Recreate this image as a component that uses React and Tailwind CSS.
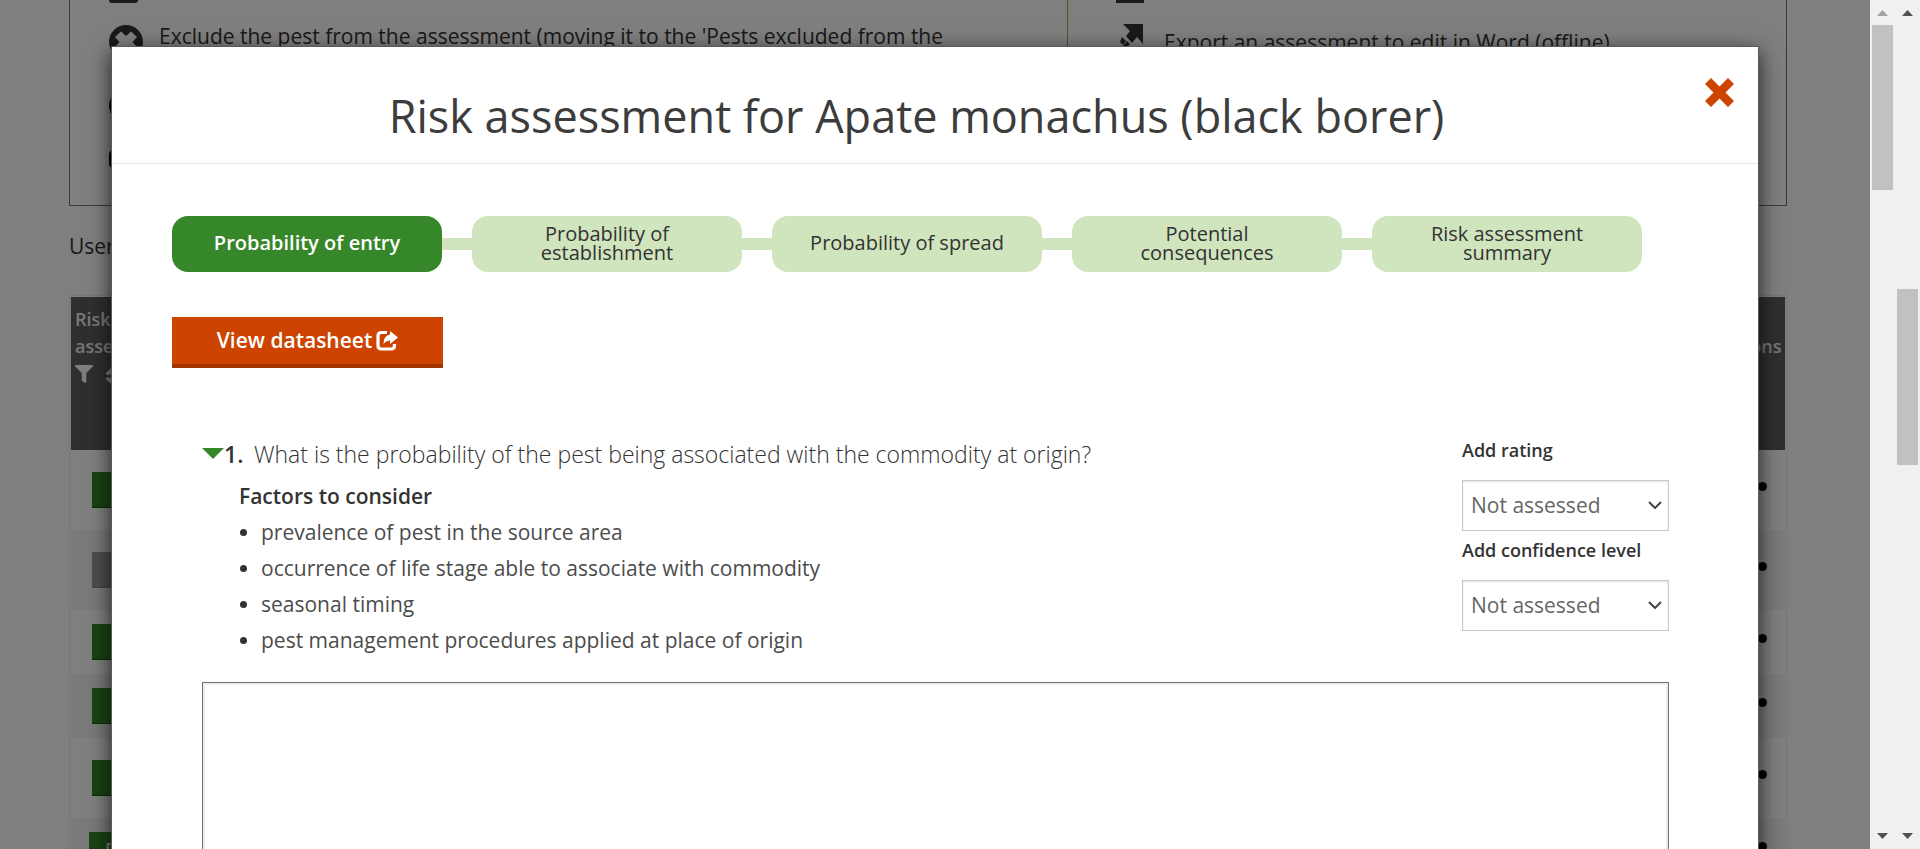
import { FaFilter, FaSort } from "react-icons/fa";

const steps = [
  "Probability of entry",
  "Probability of establishment",
  "Probability of spread",
  "Potential consequences",
  "Risk assessment summary",
];

const factors = [
  "prevalence of pest in the source area",
  "occurrence of life stage able to associate with commodity",
  "seasonal timing",
  "pest management procedures applied at place of origin",
];

const rows = [
  { h: "h-20", btn: "ml-[21px] bg-[#368729] border-[#1b5a10]" },
  { h: "h-20", btn: "ml-[21px] bg-[#9a9a9a] border-[#888888]" },
  { h: "h-16", btn: "ml-[21px] bg-[#368729] border-[#1b5a10]" },
  { h: "h-16", btn: "ml-[21px] bg-[#368729] border-[#1b5a10]" },
  { h: "h-20", btn: "ml-[21px] bg-[#368729] border-[#1b5a10]" },
  { h: "h-16", btn: "ml-[18px] bg-[#368729] border-[#1b5a10]", label: "Final" },
];

function ExcludeIcon() {
  return (
    <svg viewBox="0 0 34 34" className="size-[34px] shrink-0" aria-hidden="true">
      <circle cx="17" cy="17" r="17" fill="#333" />
      <path d="M12 6.500l5 4.500 5-4.500 6 5.500-4.500 5 4.500 5-6 6-5-5-5 5-6-6 4.500-5L6 12z" fill="#fff" />
    </svg>
  );
}

function ExportIcon() {
  return (
    <svg viewBox="0 0 28 28" className="h-7 w-7 shrink-0" fill="#333" aria-hidden="true">
      <path d="M7 1h20v20l-6-7-5 6-6-7 4-5zM6 14l4 4-3 4-3-3zM11 18l3 3-4 4-3-2z" />
    </svg>
  );
}

function SearchIcon() {
  return (
    <svg viewBox="0 0 34 34" className="size-[34px]" fill="none" stroke="#000" strokeWidth="4" aria-hidden="true">
      <circle cx="14" cy="12" r="13" />
      <path d="M3 32l6-6" strokeWidth="3" />
    </svg>
  );
}

function Background() {
  return (
    <div className="h-full overflow-hidden bg-white pl-[69px] pr-[83px] text-[#333]">
      <section className="grid h-[206px] grid-cols-[997px_1fr] border border-t-0 border-[#777]">
        <div className="overflow-hidden pl-[39px] text-[21px] leading-[30px]">
          <div className="h-[3px] w-[29px] rounded-b-lg bg-[#333]" />
          <div className="mt-[22px] flex items-start gap-4">
            <ExcludeIcon />
            <p className="-mt-1 w-[820px]">
              Exclude the pest from the assessment (moving it to the &#39;Pests excluded from the list&#39;)
            </p>
          </div>
          <div className="mt-2 size-[34px] rounded-full bg-black" />
          <div className="mt-6">
            <SearchIcon />
          </div>
        </div>
        <div className="border-l border-[#74b843] pl-12 text-[21px] leading-[30px]">
          <div className="h-[3px] w-7 bg-[#333]" />
          <div className="mt-5 flex gap-5">
            <ExportIcon />
            <p className="mt-1">Export an assessment to edit in Word (offline)</p>
          </div>
        </div>
      </section>
      <p className="mt-[25px] text-[21px] leading-[30px]">Users</p>
      <div className="mt-[34px] border border-[#eee] p-px">
        <table className="w-full border-collapse text-left">
          <thead>
            <tr className="h-[153px] bg-[#5e5e5e] align-top text-[18px] font-semibold leading-[27px] text-white">
              <th className="w-40 py-[9px] pl-1 font-semibold">
                <span className="block w-28 opacity-90">Risk assessment</span>
                <span className="flex gap-2 pt-[5px] text-[18px]">
                  <FaFilter />
                  <FaSort className="text-[22px]" />
                </span>
              </th>
              <th className="py-[9px] pr-0.5 font-semibold">
                <span className="ml-auto block w-[67px] opacity-90">User options</span>
              </th>
            </tr>
          </thead>
          <tbody>
            {rows.map((r, i) => (
              <tr key={i} className={`${r.h} even:bg-[#f5f5f5]`}>
                <td className="p-0">
                  <button type="button" className={`block h-9 w-32 border-b text-left text-[18px] font-semibold text-white ${r.btn}`}>
                    <span className="pl-4">{r.label}</span>
                  </button>
                </td>
                <td className="p-0 pr-[18px]">
                  <div className="mb-2 ml-auto size-[9px] rounded-full bg-black" />
                </td>
              </tr>
            ))}
          </tbody>
        </table>
      </div>
    </div>
  );
}

function RatingSelect({ id, label }) {
  return (
    <div className="h-[100px]">
      <label htmlFor={id} className="block text-[18px] font-semibold leading-6">
        {label}
      </label>
      <div className="relative mt-[18px]">
        <select
          id={id}
          className="block h-[51px] w-full appearance-none border border-[#c8c8c8] bg-white pl-2 text-[21px] text-[#666] shadow-[inset_0_1px_2px_rgba(0,0,0,0.12)]"
        >
          <option>Not assessed</option>
        </select>
        <svg viewBox="0 0 14 8" className="pointer-events-none absolute right-[7px] top-[21px] h-2 w-3.5" fill="none" stroke="#444" strokeWidth="2" aria-hidden="true">
          <path d="M1 1l6 6 6-6" />
        </svg>
      </div>
    </div>
  );
}

function Modal() {
  return (
    <div
      role="dialog"
      aria-label="Risk assessment"
      className="min-h-full border-x border-t border-[#5a5a5a] bg-white text-[#333] shadow-[0_6px_20px_rgba(0,0,0,0.75)]"
    >
      <header className="flex h-[117px] items-start border-b border-[#e5e5e5] pr-6">
        <h1 className="flex-1 pl-4 pt-[39px] text-center text-[45px] leading-[60px] text-[#3c3c3c]">
          Risk assessment for Apate monachus (black borer)
        </h1>
        <button type="button" aria-label="Close" className="mt-[31px] text-[#cc4400]">
          <svg viewBox="0 0 29 29" className="size-[29px]" fill="currentColor" aria-hidden="true">
            <path d="M6 0l8.500 8.500L23 0l6 6-8.500 8.500L29 23l-6 6-8.500-8.500L6 29l-6-6 8.500-8.500L0 6z" />
          </svg>
        </button>
      </header>
      <div className="pl-[60px] pr-[59px] pt-[52px]">
        <ol className="flex items-center">
          {steps.map((s, i) => (
            <li key={s} className="flex items-center">
              {i > 0 && <span className="h-3 w-[30px] bg-[#d0e4be]" />}
              <button
                type="button"
                className={
                  i === 0
                    ? "h-14 w-[270px] rounded-2xl bg-[#368729] px-8 pb-[3px] text-[20px] font-semibold leading-[19px] text-white"
                    : "h-14 w-[270px] rounded-2xl bg-[#d0e4be] px-8 pb-[3px] text-[20px] font-medium leading-[19px]"
                }
              >
                {s}
              </button>
            </li>
          ))}
        </ol>
        <button
          type="button"
          className="mt-[45px] flex h-[51px] w-[271px] items-center justify-center gap-1 border-b-4 border-[#a33600] bg-[#cc4400] text-[21px] font-semibold text-white"
        >
          View datasheet
          <svg viewBox="0 0 22 20" className="size-[22px]" aria-hidden="true">
            <path d="M11 1.500H5.500Q2 1.500 2 5v9.500Q2 18 5.500 18h9.500q3.500 0 3.500-3.500V13" fill="none" stroke="#fff" strokeWidth="3.200" />
            <path d="M14 0l8 6.500-8 6.500V9.500Q10 9.500 7.500 13q0-8.500 6.500-9.500z" fill="#fff" />
          </svg>
        </button>
        <div className="flex justify-between px-[30px] pt-[70px]">
          <div>
            <h2 className="flex text-[23px] font-light leading-8">
              <svg viewBox="0 0 22 11" className="mt-[10px] h-[11px] w-[22px]" fill="#368729" aria-hidden="true">
                <path d="M0 0h22L11 11z" />
              </svg>
              <span className="w-[30px] font-semibold">1.</span>
              What is the probability of the pest being associated with the commodity at origin?
            </h2>
            <div className="pl-[37px] pt-2 text-[21px]">
              <h3 className="font-semibold leading-9">Factors to consider</h3>
              <ul className="leading-9 text-[#4c4c4c]">
                {factors.map((f) => (
                  <li key={f} className="flex items-center pl-px">
                    <span className="mr-[14px] size-[7px] rounded-full bg-[#333]" />
                    {f}
                  </li>
                ))}
              </ul>
            </div>
          </div>
          <div className="w-[207px]">
            <RatingSelect id="rating" label="Add rating" />
            <RatingSelect id="confidence" label="Add confidence level" />
          </div>
        </div>
        <div className="px-[30px] pt-6">
          <textarea aria-label="Comments" className="block h-[300px] w-full resize-none border border-[#707070] bg-white shadow-[inset_0_0_0_2px_#eeeeee]" />
        </div>
      </div>
    </div>
  );
}

function Scrollbar({ thumb, upColor }) {
  return (
    <div className="flex w-[25px] flex-col items-center bg-[#f0f0f0]">
      <svg viewBox="0 0 11 6" className="mt-[10px] h-1.5 w-[11px] shrink-0" fill={upColor} aria-hidden="true">
        <path d="M0 6l5.500-6L11 6z" />
      </svg>
      <div className="w-full flex-1 px-0.5">
        <div className={thumb} />
      </div>
      <svg viewBox="0 0 11 6" className="mb-[10px] h-1.5 w-[11px] shrink-0" fill="#505050" aria-hidden="true">
        <path d="M0 0l5.500 6L11 0z" />
      </svg>
    </div>
  );
}

export default function App() {
  return (
    <div className="flex h-screen overflow-hidden font-['Open_Sans',sans-serif]">
      <div className="relative min-w-0 flex-1 overflow-hidden">
        <Background />
        <div className="absolute inset-0 overflow-hidden bg-black/50 pl-[111px] pr-[111px] pt-[46px]">
          <Modal />
        </div>
      </div>
      <Scrollbar upColor="#a3a3a3" thumb="mt-[9px] h-[165px] bg-[#c1c1c1]" />
      <Scrollbar upColor="#505050" thumb="mt-[273px] h-[176px] bg-[#c1c1c1]" />
    </div>
  );
}
